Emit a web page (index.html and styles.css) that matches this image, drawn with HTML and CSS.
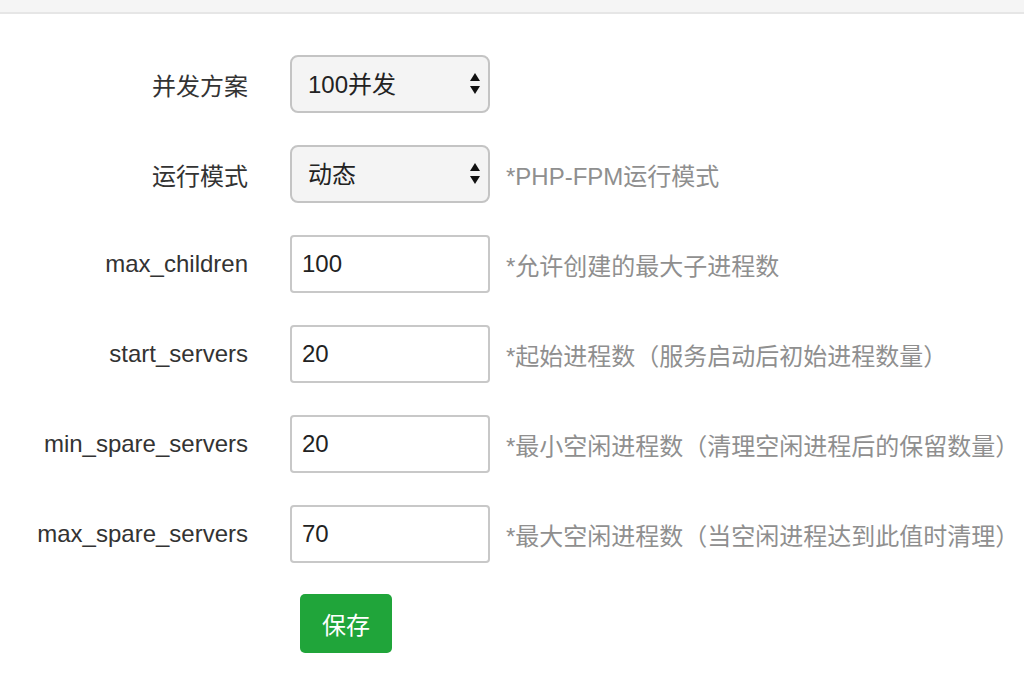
FILE: index.html
```html
<!DOCTYPE html>
<html lang="zh-CN">
<head>
<meta charset="utf-8">
<title>PHP-FPM</title>
<link rel="stylesheet" href="styles.css">
</head>
<body>
<div class="topbar"></div>
<form class="form">
  <div class="row">
    <label class="label">并发方案</label>
    <div class="select-wrap">
      <select class="select"><option>100并发</option></select>
      <svg class="arrows" width="10" height="21" viewBox="0 0 10 21"><polygon points="5,0 10,8 0,8" fill="#111"/><polygon points="0,13 10,13 5,21" fill="#111"/></svg>
    </div>
  </div>
  <div class="row">
    <label class="label">运行模式</label>
    <div class="select-wrap">
      <select class="select"><option>动态</option></select>
      <svg class="arrows" width="10" height="21" viewBox="0 0 10 21"><polygon points="5,0 10,8 0,8" fill="#111"/><polygon points="0,13 10,13 5,21" fill="#111"/></svg>
    </div>
    <span class="hint">*PHP-FPM运行模式</span>
  </div>
  <div class="row">
    <label class="label">max_children</label>
    <input class="input" type="text" value="100">
    <span class="hint">*允许创建的最大子进程数</span>
  </div>
  <div class="row">
    <label class="label">start_servers</label>
    <input class="input" type="text" value="20">
    <span class="hint">*起始进程数（服务启动后初始进程数量）</span>
  </div>
  <div class="row">
    <label class="label">min_spare_servers</label>
    <input class="input" type="text" value="20">
    <span class="hint">*最小空闲进程数（清理空闲进程后的保留数量）</span>
  </div>
  <div class="row">
    <label class="label">max_spare_servers</label>
    <input class="input" type="text" value="70">
    <span class="hint">*最大空闲进程数（当空闲进程达到此值时清理）</span>
  </div>
  <div class="actions">
    <button class="btn" type="button">保存</button>
  </div>
</form>
</body>
</html>
```
FILE: styles.css
```css
html, body {
  margin: 0;
  padding: 0;
  background: #fff;
}
body {
  font-family: "Liberation Sans", "Noto Sans CJK SC", sans-serif;
  font-size: 24px;
  color: #333;
  overflow: hidden;
}
.topbar {
  height: 12px;
  background: #f5f5f5;
  border-bottom: 2px solid #e6e6e6;
}
.form {
  padding-top: 41px;
  display: flex;
  flex-direction: column;
  gap: 32px;
}
.row {
  display: flex;
  align-items: center;
  height: 58px;
}
.label {
  width: 248px;
  text-align: right;
  margin-right: 42px;
  color: #333;
  white-space: nowrap;
}
.select-wrap {
  position: relative;
  width: 200px;
  height: 58px;
}
.select {
  appearance: none;
  -webkit-appearance: none;
  width: 200px;
  height: 58px;
  box-sizing: border-box;
  border: 2px solid #c4c4c4;
  border-radius: 8px;
  background: #f4f4f4;
  padding: 0 0 0 16px;
  font-family: inherit;
  font-size: 24px;
  color: #222;
  outline: none;
}
.arrows {
  position: absolute;
  right: 10px;
  top: 18px;
  pointer-events: none;
}
.input {
  width: 200px;
  height: 58px;
  box-sizing: border-box;
  border: 2px solid #c8c8c8;
  border-radius: 4px;
  padding: 0 0 0 10px;
  font-family: inherit;
  font-size: 24px;
  color: #222;
  background: #fff;
  outline: none;
}
.hint {
  margin-left: 16px;
  color: #8f8f8f;
  white-space: nowrap;
}
.actions {
  padding-left: 300px;
  margin-top: -1px;
}
.btn {
  width: 92px;
  height: 59px;
  border: none;
  border-radius: 5px;
  background: #20a53a;
  color: #fff;
  font-family: inherit;
  font-size: 24px;
  padding: 0;
}
```
